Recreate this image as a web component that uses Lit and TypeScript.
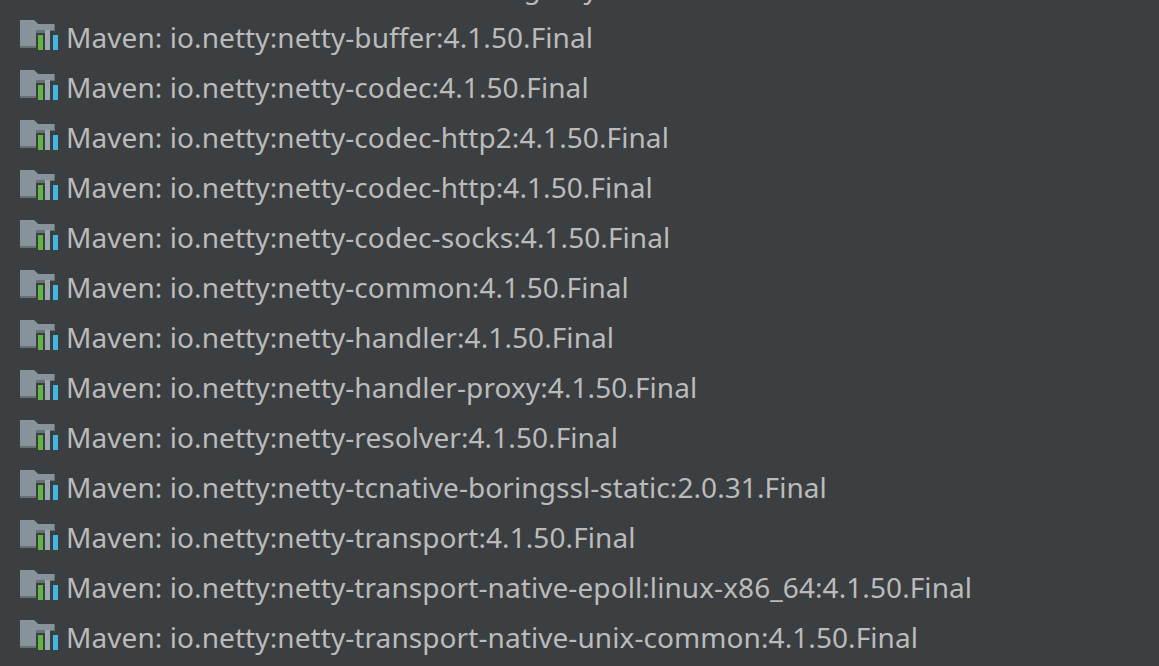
import { LitElement, html, css } from "lit";
import { customElement } from "lit/decorators.js";

const ROWS = [
  "Maven: micrometer:micrometer-registry:1.5.1",
  "Maven: io.netty:netty-buffer:4.1.50.Final",
  "Maven: io.netty:netty-codec:4.1.50.Final",
  "Maven: io.netty:netty-codec-http2:4.1.50.Final",
  "Maven: io.netty:netty-codec-http:4.1.50.Final",
  "Maven: io.netty:netty-codec-socks:4.1.50.Final",
  "Maven: io.netty:netty-common:4.1.50.Final",
  "Maven: io.netty:netty-handler:4.1.50.Final",
  "Maven: io.netty:netty-handler-proxy:4.1.50.Final",
  "Maven: io.netty:netty-resolver:4.1.50.Final",
  "Maven: io.netty:netty-tcnative-boringssl-static:2.0.31.Final",
  "Maven: io.netty:netty-transport:4.1.50.Final",
  "Maven: io.netty:netty-transport-native-epoll:linux-x86_64:4.1.50.Final",
  "Maven: io.netty:netty-transport-native-unix-common:4.1.50.Final",
];

@customElement("app-root")
export class AppRoot extends LitElement {
  static styles = css`
    :host {
      display: block;
      height: 666px;
      overflow: hidden;
      background: #3c3f41;
      font-family: "Noto Sans", "Open Sans", sans-serif;
    }
    .list {
      display: flex;
      flex-direction: column;
      margin-top: -40px;
      padding-left: 20px;
    }
    .row {
      display: flex;
      align-items: center;
      height: 50px;
      gap: 8px;
      color: #bbbbbb;
      font-size: 28px;
      letter-spacing: 0.08px;
      white-space: nowrap;
    }
    .label {
      padding-top: 4px;
    }
    svg {
      width: 38px;
      height: 30px;
      flex: none;
    }
  `;

  private icon() {
    return html`<svg viewBox="0 0 38 30">
      <path d="M0 0H14L18 4H35V11H30V28H0Z" fill="#6a7174" />
      <path d="M0 0H14L18 4H34V10H16V26H0Z" fill="#87939a" />
      <rect x="16" y="13" width="9" height="17" fill="#3c3f41" />
      <rect x="18" y="15" width="5" height="15" fill="#62b543" />
      <rect x="25" y="10" width="5" height="20" fill="#9aa7b0" />
      <rect x="30" y="13" width="3" height="17" fill="#3c3f41" />
      <rect x="33" y="15" width="5" height="15" fill="#40b6e0" />
    </svg>`;
  }

  render() {
    return html`<div class="list">
      ${ROWS.map((r) => html`<div class="row">${this.icon()}<span class="label">${r}</span></div>`)}
    </div>`;
  }
}
